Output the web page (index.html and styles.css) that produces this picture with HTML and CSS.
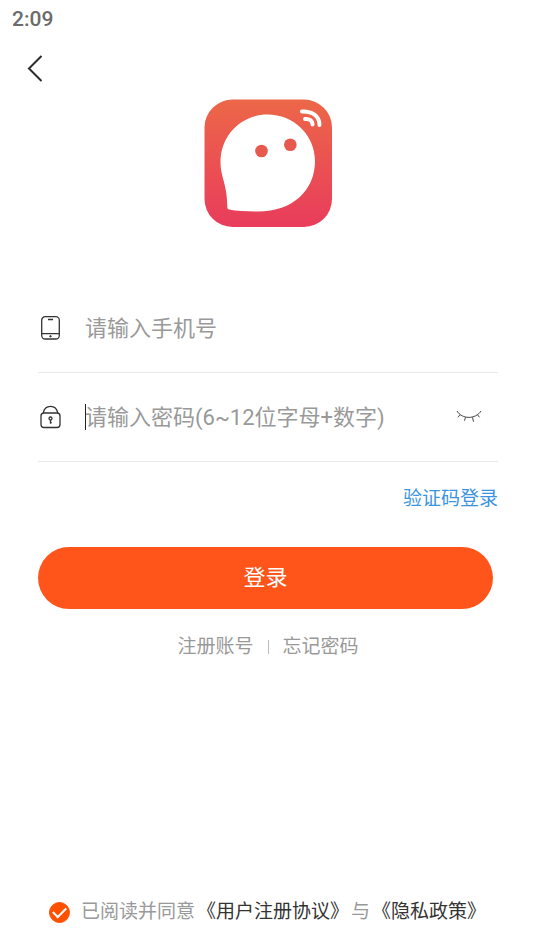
FILE: index.html
```html
<!DOCTYPE html>
<html lang="zh-CN">
<head>
  <meta charset="utf-8">
  <meta name="viewport" content="width=device-width, initial-scale=1">
  <title>登录</title>
  <link rel="stylesheet" href="styles.css">
</head>
<body>
  <div class="screen">
    <div class="status-bar">2:09</div>
    <header class="nav">
      <button class="icon-button" type="button" aria-label="返回">
        <svg width="16" height="28" viewBox="0 0 16 28" fill="none" stroke="#2b2b2b" stroke-width="2">
          <path d="M14.500 2L2 14.500L14.500 27"/>
        </svg>
      </button>
    </header>

    <svg class="logo" viewBox="0 0 128 128" role="img" aria-label="应用图标">
      <defs>
        <linearGradient id="logo-bg" x1="0" y1="0" x2="0" y2="1">
          <stop offset="0" stop-color="#ec6748"/>
          <stop offset="1" stop-color="#e93c5c"/>
        </linearGradient>
      </defs>
      <rect x=".5" y=".5" width="127.500" height="127.500" rx="28" fill="url(#logo-bg)"/>
      <path fill="#fff" d="M16.500 63C16.500 36 37.500 15.500 63.500 15.500S111 36 111 62C111 91 89 112.500 54 112.500C43 112.500 33 112 25 110.500Q23 110 23.300 108C23.500 86 16.500 78 16.500 63Z"/>
      <circle cx="57.500" cy="52" r="6.300" fill="#e7584f"/>
      <circle cx="86.300" cy="45.800" r="6.300" fill="#e7584f"/>
      <g fill="none" stroke="#fff" stroke-width="4" stroke-linecap="round">
        <path d="M98 12.500C108 12 115.500 17 115.500 26"/>
        <path d="M101 20C105.500 19.500 108.500 21.500 108.500 25.500"/>
      </g>
    </svg>

    <form class="login">
      <div class="field">
        <label class="field-icon" for="phone" aria-label="手机号">
          <svg width="24" height="26" viewBox="0 0 24 26" fill="none" stroke="#333" stroke-width="1.300">
            <rect x="3.700" y="1.700" width="17.600" height="22.300" rx="3.500"/>
            <path d="M3.700 18.700H21.300M10 4.500H15"/>
            <circle cx="12.500" cy="21.300" r=".8" fill="#333" stroke-width=".8"/>
          </svg>
        </label>
        <input class="field-input" id="phone" type="tel" placeholder="请输入手机号">
      </div>
      <div class="field">
        <label class="field-icon" for="password" aria-label="密码">
          <svg width="24" height="26" viewBox="0 0 24 26" fill="none" stroke="#333" stroke-width="1.300">
            <rect x="3" y="9" width="19" height="14.500" rx="3"/>
            <path d="M5.300 9C6 4.700 8.700 2.300 12.500 2.300S19 4.700 19.700 9"/>
            <circle cx="12.500" cy="14.500" r="1.500"/>
            <path d="M12.500 16V19.700M12.500 18.700H13.700"/>
          </svg>
        </label>
        <div class="field-body">
          <input class="field-input" id="password" type="password" placeholder="请输入密码(6~12位字母+数字)">
          <span class="caret"></span>
        </div>
        <button class="icon-button reveal" type="button" aria-label="显示密码">
          <svg width="26" height="14" viewBox="0 0 26 14" fill="none" stroke="#444" stroke-width="1">
            <path d="M1 1C6 9.500 19.500 9.500 25 1M4 4.700L2 7.300M9.500 7.300L8.500 10.700M16.500 7.300L17.500 11.700M21.500 4.700L23.500 7.300"/>
          </svg>
        </button>
      </div>
      <a class="code-login" href="#">验证码登录</a>
      <button class="submit" type="submit">登录</button>
      <nav class="links">
        <a href="#">注册账号</a>
        <span class="divider"></span>
        <a href="#">忘记密码</a>
      </nav>
    </form>

    <footer class="agreement">
      <input class="agree-box" id="agree" type="checkbox" checked>
      <p class="agree-text"><label for="agree">已阅读并同意</label><a href="#">《用户注册协议》</a>与<a href="#">《隐私政策》</a></p>
    </footer>
  </div>
</body>
</html>
```
FILE: styles.css
```css
* {
  box-sizing: border-box;
}

body {
  margin: 0;
  background: #fff;
  color: #999;
  font-family: Roboto, "Noto Sans CJK SC", sans-serif;
  font-size: 19px;
  line-height: 28px;
}

a {
  color: inherit;
  text-decoration: none;
}

button,
input {
  margin: 0;
  padding: 0;
  border: 0;
  background: none;
  font: inherit;
}

svg {
  display: block;
}

.screen {
  display: flex;
  flex-direction: column;
  min-height: 100vh;
  padding-bottom: 25px;
}

.status-bar {
  padding: 5px 12px;
  color: #6b6b6b;
  font-size: 21px;
  font-weight: 500;
}

.nav {
  display: flex;
  padding: 16px 27px;
}

.icon-button {
  cursor: pointer;
}

.logo {
  width: 128px;
  height: 128px;
  margin: 1px auto 57px;
}

.login {
  display: flex;
  flex-direction: column;
  padding: 0 37px 0 38px;
}

.field {
  display: flex;
  align-items: center;
  height: 89px;
  border-bottom: 1px solid #e9e9e9;
}

.field-icon {
  flex: none;
  width: 47px;
}

.field-body {
  position: relative;
  display: flex;
  flex: 1;
}

.field-input {
  flex: 1;
  min-width: 0;
  height: 32px;
  color: #333;
  font-size: 22px;
  outline: none;
}

.field-input::placeholder {
  color: #999;
  opacity: 1;
}

.caret {
  position: absolute;
  top: 3px;
  left: 0;
  width: 1px;
  height: 26px;
  background: #222;
}

.reveal {
  margin-right: 16px;
}

.code-login {
  align-self: flex-end;
  margin-top: 23px;
  color: #3b94e0;
}

.submit {
  height: 62px;
  margin: 34px 5px 0 0;
  border-radius: 31px;
  background: #ff541a;
  color: #fff;
  font-size: 22px;
  cursor: pointer;
}

.links {
  display: flex;
  justify-content: center;
  align-items: center;
  gap: 14px;
  margin-top: 24px;
}

.divider {
  width: 1px;
  height: 14px;
  background: #bbb;
}

.agreement {
  display: flex;
  align-items: center;
  gap: 11px;
  margin-top: auto;
  padding: 0 49px;
}

.agree-box {
  display: grid;
  place-items: center;
  flex: none;
  width: 21px;
  height: 21px;
  border: 1px solid #ff5000;
  border-radius: 50%;
  appearance: none;
}

.agree-box:checked {
  background: #ff5000;
}

.agree-box:checked::after {
  content: "";
  width: 11px;
  height: 6px;
  margin-bottom: 3px;
  border: solid #fff;
  border-width: 0 0 2px 2px;
  transform: rotate(-45deg);
}

.agree-text {
  margin: 0;
  white-space: nowrap;
}

.agree-text a {
  margin: 0 2px;
  color: #333;
}
```
